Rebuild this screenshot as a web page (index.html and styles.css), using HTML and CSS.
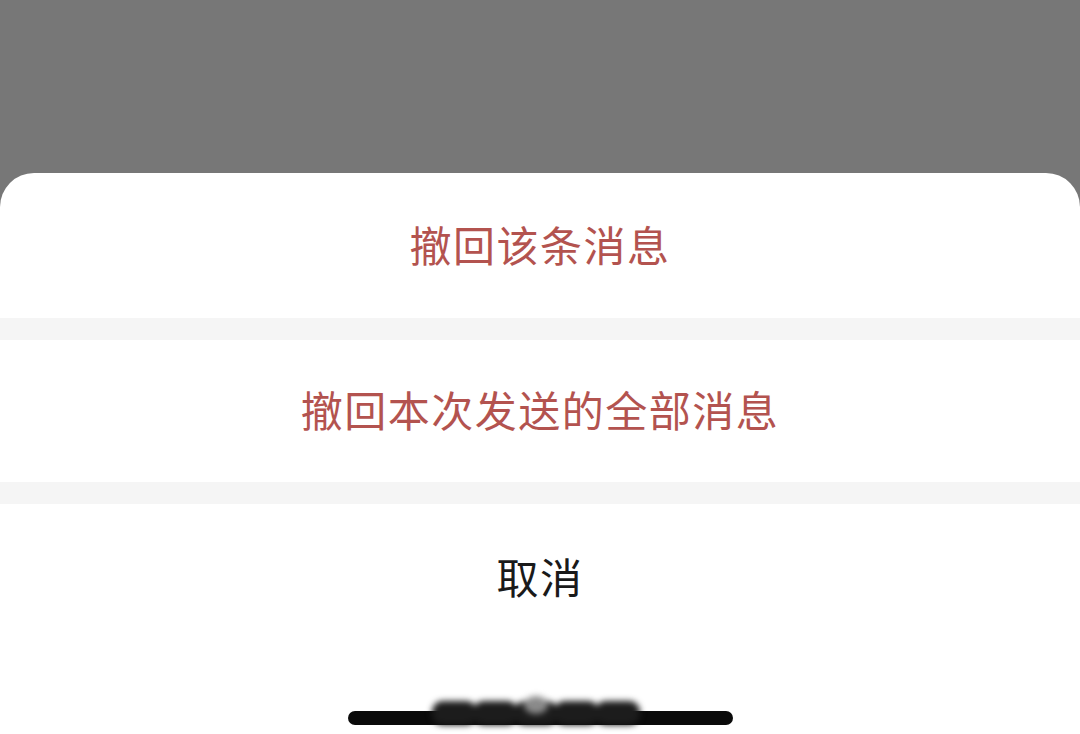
FILE: index.html
```html
<!DOCTYPE html>
<html>
<head>
    <meta charset="utf-8">
    <title>撤回消息</title>
    <link rel="stylesheet" href="styles.css">
</head>
<body>
    <div class="mask"></div>
    <div class="sheet">
        <div class="item item-first danger">撤回该条消息</div>
        <div class="gap"></div>
        <div class="item item-second danger">撤回本次发送的全部消息</div>
        <div class="gap"></div>
        <div class="item item-cancel">取消</div>
        <div class="home-area">
            <div class="home-bar"></div>
            <div class="smudge">
                <span class="blob"></span>
                <span class="blob"></span>
                <span class="blob"></span>
                <span class="blob"></span>
                <span class="blob"></span>
                <span class="smudge-dot"></span>
            </div>
        </div>
    </div>
</body>
</html>
```

FILE: styles.css
```css
html, body {
    margin: 0;
    padding: 0;
    height: 100%;
}

body {
    width: 1080px;
    height: 734px;
    overflow: hidden;
    background: #777777;
    font-family: "Noto Sans CJK SC", "Noto Sans", sans-serif;
    display: flex;
    flex-direction: column;
}

.mask {
    height: 173px;
    flex-shrink: 0;
}

.sheet {
    flex: 1;
    background: #ffffff;
    border-radius: 34px 34px 0 0;
    display: flex;
    flex-direction: column;
}

.item {
    display: flex;
    align-items: center;
    justify-content: center;
    box-sizing: border-box;
    padding-bottom: 5px;
    font-size: 42px;
    letter-spacing: 1.5px;
    color: #1a1a1a;
}

.item-first {
    height: 145px;
}

.item-second {
    height: 142px;
}

.item-cancel {
    height: 148px;
}

.danger {
    color: #b3534f;
}

.gap {
    height: 22px;
    background: #f5f5f5;
}

.home-area {
    flex: 1;
    position: relative;
    display: flex;
    justify-content: center;
    align-items: flex-start;
}

.home-bar {
    margin-top: 59px;
    width: 385px;
    height: 14px;
    border-radius: 7px;
    background: #0a0a0a;
}

.smudge {
    position: absolute;
    left: 434px;
    top: 49px;
    width: 204px;
    height: 24px;
    display: flex;
    filter: blur(3px);
}

.blob {
    flex: 1;
    margin: 0 -2px;
    border-radius: 11px;
    background: #1c1c1c;
}

.smudge-dot {
    position: absolute;
    left: 90px;
    top: -5px;
    width: 24px;
    height: 18px;
    border-radius: 50%;
    background: #8a8a8a;
}
```
